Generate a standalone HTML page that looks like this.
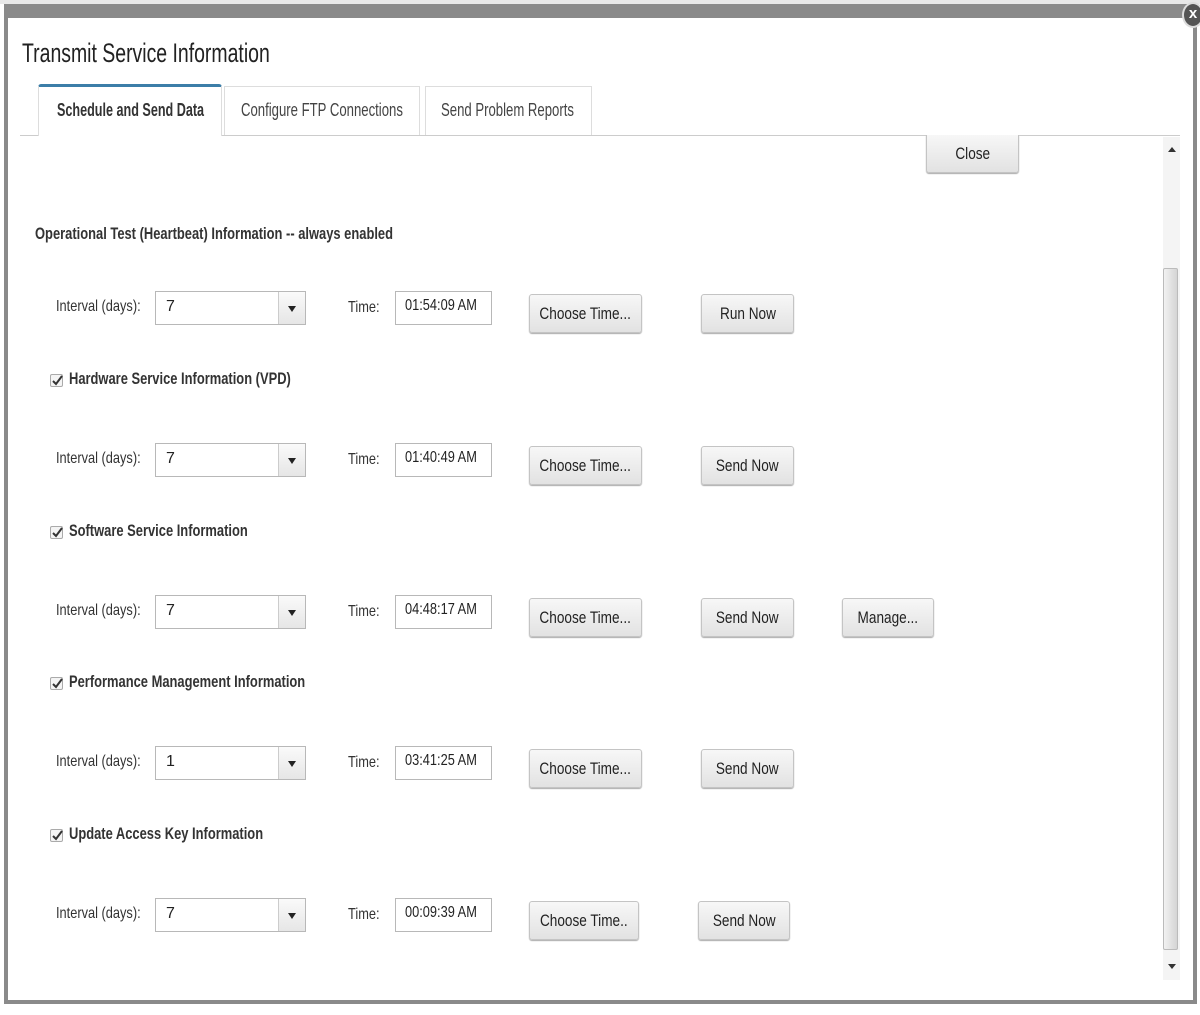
<!DOCTYPE html>
<html><head><style>
body{margin:0;width:1200px;height:1015px;background:#fff;position:relative;overflow:hidden;font-family:"Liberation Sans",sans-serif;color:#222}
.a{position:absolute;white-space:nowrap}
.t{display:inline-block;transform:scaleX(.8);transform-origin:left center;white-space:nowrap}
.sel{position:absolute;width:151px;height:34px;border:1px solid #b8b8b8;box-sizing:border-box;background:#fff}
.sel .v{position:absolute;left:10px;top:6px;font-size:16px}
.sel .ar{position:absolute;right:0;top:0;width:26px;height:32px;border-left:1px solid #ccc;background:linear-gradient(#fafafa,#e6e6e6)}
.sel .ar:after{content:"";position:absolute;left:9px;top:14px;border-left:4px solid transparent;border-right:4px solid transparent;border-top:6px solid #222}
.tm{position:absolute;width:97px;height:34px;border:1px solid #b8b8b8;box-sizing:border-box;font-size:16px;padding:5px 0 0 9px;white-space:nowrap;overflow:hidden}
.btn{position:absolute;height:39px;border:1px solid #c4c4c4;border-radius:3px;box-sizing:border-box;background:linear-gradient(#f7f7f7,#e2e2e2);box-shadow:0 1px 1px #aaa;font-size:17px;text-align:center;line-height:37px;white-space:nowrap}
.btn .t{transform-origin:center center;margin:0 -30px}
.lbl{position:absolute;font-size:16px;color:#333;white-space:nowrap}
.cb{position:absolute;width:13px;height:13px;border:1px solid #aaa;border-radius:2px;background:#f4f4f4;box-sizing:border-box}
.cb svg{position:absolute;left:0;top:-1px}
.h{position:absolute;font-size:17px;font-weight:bold;color:#333;white-space:nowrap}
.h .t{transform:scaleX(.76)}
</style></head><body>
<div class="a" style="left:0;top:0;width:1200px;height:4px;background:#e8e8e8"></div>
<div class="a" style="left:4px;top:4px;width:1193px;height:1000px;border:4px solid #8a8a8a;border-top:14px solid #8a8a8a;box-sizing:border-box;background:#fff"></div>
<div class="a" style="left:1182px;top:2px;width:18px;height:22px;border-radius:50%;background:#555;border:2px solid #ddd;color:#fff;font-weight:bold;font-size:15px;text-align:center;line-height:20px">x</div>
<div class="a" style="left:22px;top:38px;font-size:27px;color:#222"><span class="t" style="transform:scaleX(.72)">Transmit Service Information</span></div>
<div class="a" style="left:20px;top:135px;width:1160px;height:1px;background:#ccc"></div>
<div class="a" style="left:38px;top:84px;width:184px;height:52px;border:1px solid #ddd;border-top:3px solid #3c7ea8;border-bottom:none;box-sizing:border-box;background:#fff;border-radius:3px 3px 0 0"></div>
<div class="a" style="left:224px;top:86px;width:196px;height:49px;border:1px solid #ddd;border-bottom:none;box-sizing:border-box;background:#fff"></div>
<div class="a" style="left:425px;top:86px;width:167px;height:49px;border:1px solid #ddd;border-bottom:none;box-sizing:border-box;background:#fff"></div>
<div class="a" style="left:57px;top:100px;font-size:18px;font-weight:bold;color:#333"><span class="t" style="transform:scaleX(.7)">Schedule and Send Data</span></div>
<div class="a" style="left:241px;top:100px;font-size:18px;color:#444"><span class="t" style="transform:scaleX(.73)">Configure FTP Connections</span></div>
<div class="a" style="left:441px;top:100px;font-size:18px;color:#444"><span class="t" style="transform:scaleX(.73)">Send Problem Reports</span></div>
<div class="btn" style="left:926px;top:135px;width:93px;height:38px;border-top:none;border-radius:0 0 3px 3px"><span class="t">Close</span></div>
<div class="a" style="left:1163px;top:137px;width:17px;height:843px;background:#f4f4f4"></div>
<div class="a" style="left:1168px;top:147px;border-left:4px solid transparent;border-right:4px solid transparent;border-bottom:5px solid #333"></div>
<div class="a" style="left:1163px;top:268px;width:15px;height:682px;background:linear-gradient(90deg,#f2f2f2,#d4d4d4);border:1px solid #bbb;box-sizing:border-box;border-radius:2px"></div>
<div class="a" style="left:1168px;top:964px;border-left:4px solid transparent;border-right:4px solid transparent;border-top:5px solid #333"></div>
<div class="h" style="left:35px;top:224px"><span class="t">Operational Test (Heartbeat) Information -- always enabled</span></div>

<div class="lbl" style="left:56px;top:298px"><span class="t">Interval (days):</span></div>
<div class="sel" style="left:155px;top:291px"><span class="v">7</span><span class="ar"></span></div>
<div class="lbl" style="left:348px;top:299px"><span class="t">Time:</span></div>
<div class="tm" style="left:395px;top:291px"><span class="t">01:54:09 AM</span></div>
<div class="btn" style="left:529px;top:294px;width:113px"><span class="t">Choose Time...</span></div>
<div class="btn" style="left:701px;top:294px;width:93px"><span class="t">Run Now</span></div>

<div class="cb" style="left:50px;top:374px"><svg width="13" height="13"><path d="M2 7l3 3 6-8" stroke="#333" stroke-width="2" fill="none"/></svg></div>
<div class="h" style="left:69px;top:369px"><span class="t">Hardware Service Information (VPD)</span></div>
<div class="lbl" style="left:56px;top:450px"><span class="t">Interval (days):</span></div>
<div class="sel" style="left:155px;top:443px"><span class="v">7</span><span class="ar"></span></div>
<div class="lbl" style="left:348px;top:451px"><span class="t">Time:</span></div>
<div class="tm" style="left:395px;top:443px"><span class="t">01:40:49 AM</span></div>
<div class="btn" style="left:529px;top:446px;width:113px"><span class="t">Choose Time...</span></div>
<div class="btn" style="left:701px;top:446px;width:93px"><span class="t">Send Now</span></div>

<div class="cb" style="left:50px;top:526px"><svg width="13" height="13"><path d="M2 7l3 3 6-8" stroke="#333" stroke-width="2" fill="none"/></svg></div>
<div class="h" style="left:69px;top:521px"><span class="t">Software Service Information</span></div>
<div class="lbl" style="left:56px;top:602px"><span class="t">Interval (days):</span></div>
<div class="sel" style="left:155px;top:595px"><span class="v">7</span><span class="ar"></span></div>
<div class="lbl" style="left:348px;top:603px"><span class="t">Time:</span></div>
<div class="tm" style="left:395px;top:595px"><span class="t">04:48:17 AM</span></div>
<div class="btn" style="left:529px;top:598px;width:113px"><span class="t">Choose Time...</span></div>
<div class="btn" style="left:701px;top:598px;width:93px"><span class="t">Send Now</span></div>
<div class="btn" style="left:842px;top:598px;width:92px"><span class="t">Manage...</span></div>

<div class="cb" style="left:50px;top:677px"><svg width="13" height="13"><path d="M2 7l3 3 6-8" stroke="#333" stroke-width="2" fill="none"/></svg></div>
<div class="h" style="left:69px;top:672px"><span class="t">Performance Management Information</span></div>
<div class="lbl" style="left:56px;top:753px"><span class="t">Interval (days):</span></div>
<div class="sel" style="left:155px;top:746px"><span class="v">1</span><span class="ar"></span></div>
<div class="lbl" style="left:348px;top:754px"><span class="t">Time:</span></div>
<div class="tm" style="left:395px;top:746px"><span class="t">03:41:25 AM</span></div>
<div class="btn" style="left:529px;top:749px;width:113px"><span class="t">Choose Time...</span></div>
<div class="btn" style="left:701px;top:749px;width:93px"><span class="t">Send Now</span></div>

<div class="cb" style="left:50px;top:829px"><svg width="13" height="13"><path d="M2 7l3 3 6-8" stroke="#333" stroke-width="2" fill="none"/></svg></div>
<div class="h" style="left:69px;top:824px"><span class="t">Update Access Key Information</span></div>
<div class="lbl" style="left:56px;top:905px"><span class="t">Interval (days):</span></div>
<div class="sel" style="left:155px;top:898px"><span class="v">7</span><span class="ar"></span></div>
<div class="lbl" style="left:348px;top:906px"><span class="t">Time:</span></div>
<div class="tm" style="left:395px;top:898px"><span class="t">00:09:39 AM</span></div>
<div class="btn" style="left:529px;top:901px;width:110px"><span class="t">Choose Time..</span></div>
<div class="btn" style="left:698px;top:901px;width:92px"><span class="t">Send Now</span></div>
</body></html>
